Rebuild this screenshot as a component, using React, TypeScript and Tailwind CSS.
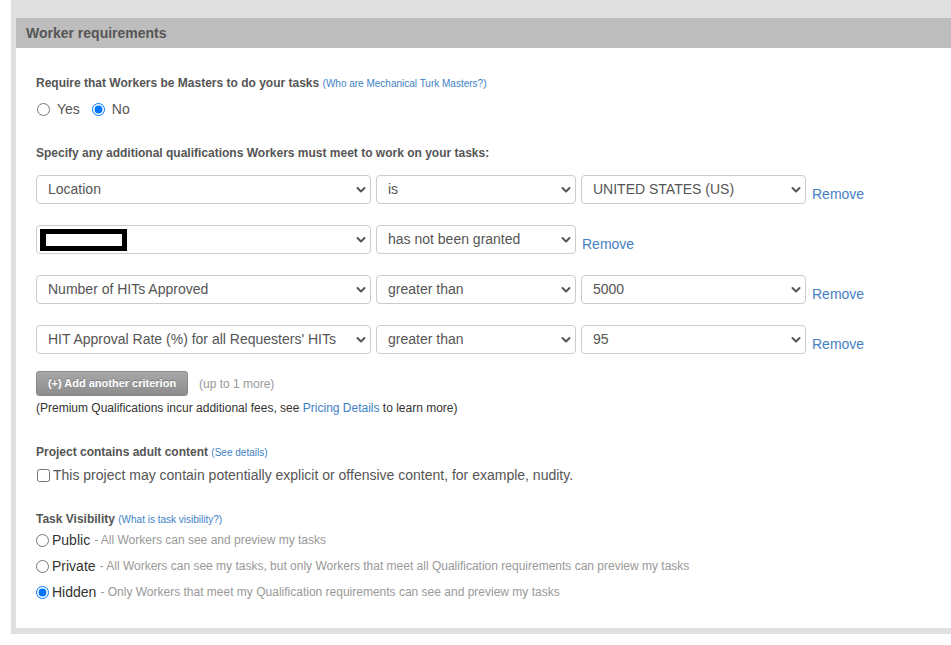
import React from "react";

const font = { fontFamily: '"Liberation Sans", Arial, sans-serif' };

function Chevron() {
  return (
    <svg width="10" height="8" viewBox="0 0 10 8" className="shrink-0">
      <path d="M1.5 2 L5 5.5 L8.5 2" fill="none" stroke="#555" strokeWidth="2" strokeLinecap="round" strokeLinejoin="round" />
    </svg>
  );
}

function Sel({ w, children, pl = "pl-[11px]" }: { w: string; children?: React.ReactNode; pl?: string }) {
  return (
    <div className={`${w} h-[29px] border border-[#ccc] rounded-[4px] bg-white flex items-center ${pl} pr-[4px] text-[14px] text-[#555]`}>
      <div className="flex-1 whitespace-nowrap">{children}</div>
      <Chevron />
    </div>
  );
}

function Remove() {
  return <a className="self-end mb-[2px] ml-[6px] text-[14px] text-[#4580c2] leading-[16px]">Remove</a>;
}

function Row({ a, b, c, remove }: { a: React.ReactNode; b: string; c?: string; remove?: boolean }) {
  return (
    <div className="flex h-[29px]">
      <Sel w="w-[335px]">{a}</Sel>
      <div className="ml-[5px]">
        <Sel w="w-[200px]">{b}</Sel>
      </div>
      {c !== undefined && (
        <div className="ml-[5px]">
          <Sel w="w-[225px]">{c}</Sel>
        </div>
      )}
      {remove && <Remove />}
    </div>
  );
}

export default function App() {
  return (
    <div className="bg-white w-[951px] h-[645px]" style={font}>
      <div className="ml-[11px] bg-[#e0e0e0] pt-[18px] pl-[5px] pb-[6px]">
        <div className="bg-white">
          <div className="h-[30px] bg-[#bdbdbd] pl-[10px] flex items-center text-[14px] font-bold text-[#555]">
            Worker requirements
          </div>
          <div className="pl-[20px] pb-[26px]">
            <div className="mt-[27px] leading-[16px] text-[12px] font-bold text-[#555]">
              Require that Workers be Masters to do your tasks{" "}
              <a className="font-normal text-[10px] text-[#3d7fc4]">(Who are Mechanical Turk Masters?)</a>
            </div>
            <div className="mt-[7px] h-[20px] flex items-center text-[14px] text-[#555]">
              <input type="radio" name="m" className="m-0 ml-[1px] w-[13px] h-[13px]" readOnly />
              <span className="ml-[7px]">Yes</span>
              <input type="radio" name="m" defaultChecked className="m-0 ml-[12px] w-[13px] h-[13px]" />
              <span className="ml-[7px]">No</span>
            </div>
            <div className="mt-[26px] leading-[16px] text-[12px] font-bold text-[#555]">
              Specify any additional qualifications Workers must meet to work on your tasks:
            </div>
            <div className="mt-[14px] flex flex-col gap-[21px]">
              <Row a="Location" b="is" c="UNITED STATES (US)" remove />
              <div className="flex h-[29px]">
                <Sel w="w-[335px]" pl="pl-[3px]">
                  <div className="w-[87px] h-[22px] border-[5px] border-l-[6px] border-black bg-white" />
                </Sel>
                <div className="ml-[5px]">
                  <Sel w="w-[200px]">has not been granted</Sel>
                </div>
                <Remove />
              </div>
              <Row a="Number of HITs Approved" b="greater than" c="5000" remove />
              <Row a="HIT Approval Rate (%) for all Requesters' HITs" b="greater than" c="95" remove />
            </div>
            <div className="mt-[17px] flex items-center">
              <button
                className="w-[152px] h-[25px] rounded-[3px] border border-[#8a8a8a] bg-gradient-to-b from-[#a8a8a8] to-[#8c8c8c] text-white text-[11px] font-bold"
                style={{ textShadow: "0 -1px 0 rgba(0,0,0,0.25)" }}
              >
                (+) Add another criterion
              </button>
              <span className="ml-[11px] text-[12px] text-[#999]">(up to 1 more)</span>
            </div>
            <div className="mt-[4px] leading-[16px] text-[12px] text-[#333]">
              (Premium Qualifications incur additional fees, see <a className="text-[#3d7fc4]">Pricing Details</a> to learn more)
            </div>
            <div className="mt-[28px] leading-[16px] text-[12px] font-bold text-[#555]">
              Project contains adult content <a className="font-normal text-[10px] text-[#3d7fc4]">(See details)</a>
            </div>
            <div className="mt-[4px] h-[20px] flex items-center text-[14px] text-[#555]">
              <input type="checkbox" className="m-0 ml-[1px] w-[13px] h-[13px]" />
              <span className="ml-[3px]">This project may contain potentially explicit or offensive content, for example, nudity.</span>
            </div>
            <div className="mt-[26px] leading-[16px] text-[12px] font-bold text-[#555]">
              Task Visibility <a className="font-normal text-[10px] text-[#3d7fc4]">(What is task visibility?)</a>
            </div>
            <div className="mt-[2px] flex flex-col gap-[6px]">
              {[
                ["Public", "All Workers can see and preview my tasks", false],
                ["Private", "All Workers can see my tasks, but only Workers that meet all Qualification requirements can preview my tasks", false],
                ["Hidden", "Only Workers that meet my Qualification requirements can see and preview my tasks", true],
              ].map(([l, d, c]) => (
                <div key={l as string} className="h-[20px] flex items-center">
                  <input type="radio" name="v" defaultChecked={c as boolean} className="m-0 w-[13px] h-[13px]" />
                  <span className="ml-[3px] text-[14px] text-[#333]">{l as string}</span>
                  <span className="ml-[4px] text-[12px] text-[#999]">- {d as string}</span>
                </div>
              ))}
            </div>
          </div>
        </div>
      </div>
    </div>
  );
}
